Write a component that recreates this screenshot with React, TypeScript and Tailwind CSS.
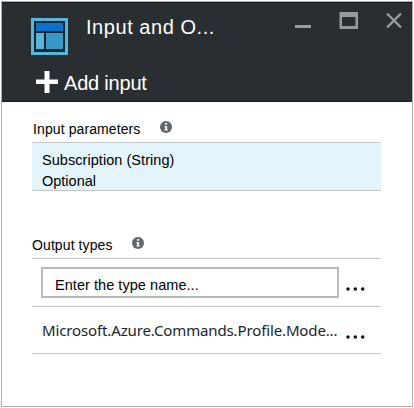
import type { ReactNode } from "react";

const arial = "font-['Liberation_Sans',Arial,sans-serif]";

function InfoIcon() {
  return (
    <svg width="12" height="12" viewBox="0 0 12 12" className="shrink-0">
      <circle cx="6" cy="6" r="6" fill="#626669" />
      <path d="M5 2h2.2v1.8H5zM4.3 4.9h2.9v3.7h.8v1H4.2v-1H5V5.9h-.7z" fill="#e9eaeb" />
    </svg>
  );
}

function MoreButton() {
  return (
    <button type="button" aria-label="More" className="mt-[13px] h-1 w-[19px] shrink-0">
      <svg width="19" height="4" viewBox="0 0 19 4" fill="#111820" className="block">
        <circle cx="2" cy="2" r="1.8" />
        <circle cx="9.3" cy="2" r="1.8" />
        <circle cx="16.7" cy="2" r="1.8" />
      </svg>
    </button>
  );
}

function SectionLabel({ children, className }: { children: ReactNode; className: string }) {
  return <h2 className={`whitespace-nowrap text-[14px] leading-4 tracking-[0.1px] ${className}`}>{children}</h2>;
}

export default function App() {
  return (
    <div className={`h-[408px] w-[414px] bg-white p-px text-black ${arial}`}>
      <div className="flex h-[406px] w-[412px] flex-col border border-[#aeb0b1] bg-white">
        <header className="h-[100px] shrink-0 border-y border-[#171c1f] bg-[#292e32] text-white">
          <div className="flex h-[62px] items-start">
            <svg width="37" height="37" viewBox="0 0 37 37" className="ml-[29px] mt-[15px] shrink-0">
              <path d="M0 0h37v37H0z" fill="#55b6df" />
              <path d="M3 3h31v31H3z" fill="#1d252b" />
              <path d="M5 5h27v8H5z" fill="#0872ce" />
              <path d="M5 15h8v16H5z" fill="#59b4d9" />
              <path d="M15 15h17v16H15z" fill="#3999c6" />
            </svg>
            <h1 className="ml-[18px] mt-3 w-[208px] whitespace-nowrap text-[20px] leading-6 tracking-[0.55px]">Input and O...</h1>
            <svg width="108" height="18" viewBox="0 0 108 18" className="mt-[9px] shrink-0">
              <path d="M1 13h16v3H1z" fill="#999c9e" />
              <path d="M45.5 0h18.5v17H45.5zM48 5v9h13.5V5z" fill="#969a9c" fillRule="evenodd" />
              <path d="M93 1.5l14 14M107 1.5l-14 14" stroke="#999c9e" strokeWidth="2.4" />
            </svg>
          </div>
          <div className="flex items-start">
            <svg width="22" height="22" viewBox="0 0 22 22" className="ml-[34px] mt-[6px] shrink-0">
              <path d="M8.5 0h5v8.5H22v4.5h-8.5V22h-5v-9H0V8.5h8.5z" fill="#fff" />
            </svg>
            <span className="ml-[6px] mt-[6px] whitespace-nowrap text-[20px] leading-6 tracking-[-0.2px]">Add input</span>
          </div>
        </header>

        <main className="ml-[30px] w-[349px]">
          <div className="flex h-[40px] items-start pt-[19px]">
            <SectionLabel className="w-[128px] pl-px">Input parameters</SectionLabel>
            <InfoIcon />
          </div>
          <div className="h-[49px] border-y border-[#c4c7c8] bg-[#e3f4fc] pl-[10px] pt-[7px] text-[14.5px] leading-[21px]">
            <p className="tracking-[0.05px]">Subscription (String)</p>
            <p>Optional</p>
          </div>
          <div className="flex h-[67px] items-start pt-[46px]">
            <SectionLabel className="w-[100px]">Output types</SectionLabel>
            <InfoIcon />
          </div>
          <div className="flex h-12 items-center border-t border-[#c4c7c8] pl-[9px]">
            <input
              aria-label="Type name"
              defaultValue="Enter the type name..."
              className="h-[31px] w-[298px] border-2 border-[#b6b8b9] bg-white pl-[12px] pt-1 text-[14.5px] tracking-[0.05px] outline-none"
            />
            <span className="w-[7px]" />
            <MoreButton />
          </div>
          <div className="flex h-12 items-center border-y border-[#c4c7c8] pl-[9px]">
            <span className="w-[305px] whitespace-nowrap pl-px font-['Noto_Sans','Open_Sans',sans-serif] text-[15px] tracking-[-0.13px] text-[#20242c]">
              Microsoft.Azure.Commands.Profile.Mode...
            </span>
            <MoreButton />
          </div>
        </main>
      </div>
    </div>
  );
}
